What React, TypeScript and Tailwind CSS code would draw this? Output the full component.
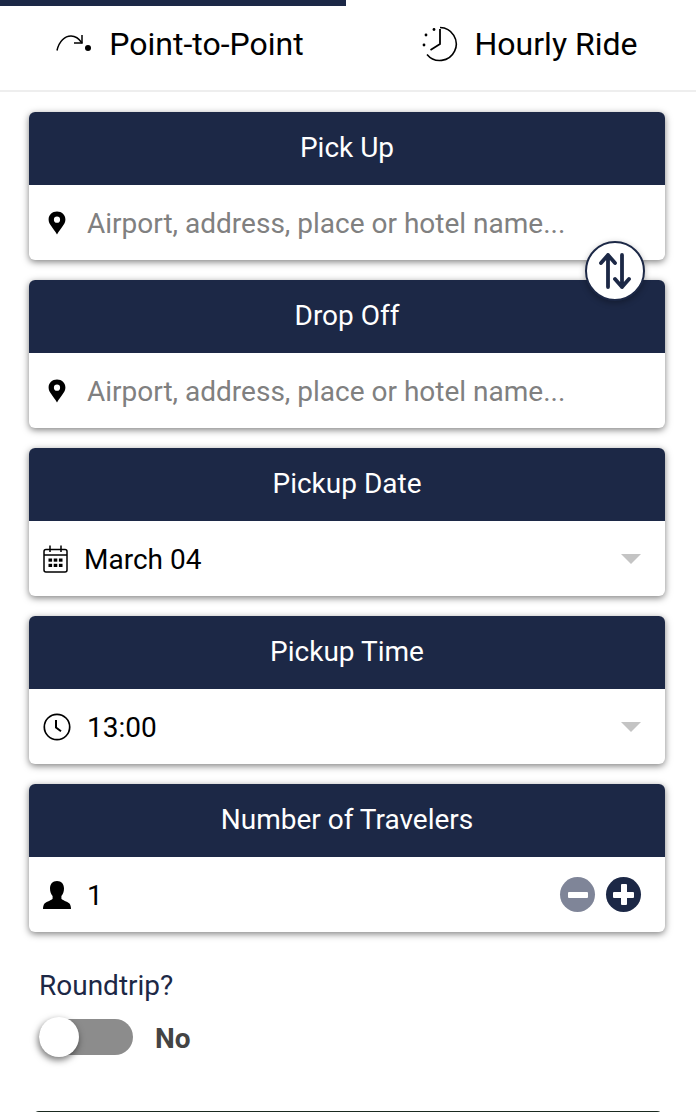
import { useState } from 'react';

const navy = 'bg-[#1c2846]';

function PinIcon() {
  return (
    <svg width="18" height="24" viewBox="0 0 18 24" className="text-black">
      <path
        fill="currentColor"
        fillRule="evenodd"
        d="M9 0.5C4.2 0.5 .6 4 .6 8.4c0 2.4 1 4.4 2.8 6.9 1.4 2 3.7 5 5.6 8.2 1.9-3.2 4.2-6.2 5.6-8.2 1.8-2.5 2.8-4.5 2.8-6.9C17.400 4 13.800 .5 9 .5zm0 5.100a3.100 3.100 0 1 1 0 6.200 3.100 3.100 0 0 1 0-6.200z"
      />
    </svg>
  );
}

function CalendarIcon() {
  return (
    <svg width="26" height="28" viewBox="0 0 26 28" fill="none" stroke="black" strokeWidth="1.5">
      <rect x="1" y="4.500" width="23" height="22.500" rx="2" />
      <path d="M1 10h23M7 .5v6.500M18 .5v6.500" />
      <g fill="black" stroke="none">
        <rect x="5.500" y="13.500" width="3.600" height="3.200" />
        <rect x="10.700" y="13.500" width="3.600" height="3.200" />
        <rect x="15.900" y="13.500" width="3.600" height="3.200" />
        <rect x="5.500" y="18.800" width="3.600" height="3.200" />
        <rect x="10.700" y="18.800" width="3.600" height="3.200" />
        <rect x="15.900" y="18.800" width="3.600" height="3.200" />
      </g>
    </svg>
  );
}

function ClockIcon() {
  return (
    <svg width="28" height="28" viewBox="0 0 28 28" fill="none" stroke="black">
      <circle cx="14" cy="14" r="12.700" strokeWidth="1.700" />
      <path d="M13 7v7.600l5 3.600" strokeWidth="2" />
    </svg>
  );
}

function PersonIcon() {
  return (
    <svg width="28" height="28" viewBox="0 0 28 28">
      <path
        fill="black"
        d="M14 0c-4.500 0-7 3-7 7.500 0 3 1 5.800 2.600 7.600v2.600c-.6 1.400-6 2.800-7.800 4.600C.6 23.500 0 25.800 0 28h28c0-2.200-.6-4.500-1.800-5.700-1.800-1.800-7.200-3.200-7.800-4.600v-2.600c1.600-1.800 2.600-4.600 2.600-7.600C21 3 18.500 0 14 0z"
      />
    </svg>
  );
}

function Card({ title, children }: { title: string; children: React.ReactNode }) {
  return (
    <div className="rounded-[6px] bg-white shadow-[0_2px_7px_rgba(0,0,0,0.5)]">
      <div className={`${navy} flex h-[73px] items-center justify-center rounded-t-[6px] pb-[2px] text-[28px] text-white`}>
        {title}
      </div>
      <div className="flex h-[75px] items-center">{children}</div>
    </div>
  );
}

function Caret() {
  return <div className="ml-auto mr-[24px] h-0 w-0 border-x-[10px] border-t-[10px] border-x-transparent border-t-[#c4c4c4]" />;
}

function PlaceInput() {
  return (
    <>
      <span className="ml-[19px] flex w-[18px] justify-center"><PinIcon /></span>
      <span className="ml-[21px] pt-[2px] text-[28px] text-[#808080]">Airport, address, place or hotel name...</span>
    </>
  );
}

export default function App() {
  const [roundtrip, setRoundtrip] = useState(false);
  const [travelers, setTravelers] = useState(1);

  return (
    <div className="h-[1112px] overflow-hidden bg-white font-['Roboto',sans-serif] text-black">
      <div className="h-[92px] border-b-2 border-[#eeeeee]">
        <div className={`${navy} h-[6px] w-[346px]`} />
        <div className="flex h-[84px]">
          <button className="flex w-[346px] items-center justify-center gap-[17px] pb-[8px] pl-[14px] text-[32px]">
            <svg width="36" height="20" viewBox="0 0 36 20" fill="none" stroke="black" strokeWidth="1.500">
              <path d="M1 16.500C3 7 9 2 15 2c4 0 8 2.500 11 7" />
              <path d="M26 1v8h-8" />
              <circle cx="32" cy="14" r="3" fill="black" stroke="none" />
            </svg>
            Point-to-Point
          </button>
          <button className="flex flex-1 items-center justify-center gap-[17px] pb-[8px] pl-[17px] text-[32px]">
            <svg width="36" height="36" viewBox="0 0 36 36" fill="none" stroke="black" strokeWidth="1.600">
              <path d="M18 1.500a16.500 16.500 0 1 1-13 27" />
              <path d="M18 3v15l-9.500 6" strokeWidth="1.800" />
              <g fill="black" stroke="none">
                <circle cx="12" cy="3.500" r="1.400" />
                <circle cx="4" cy="9" r="1.400" />
                <circle cx="2" cy="19" r="1.400" />
              </g>
            </svg>
            Hourly Ride
          </button>
        </div>
      </div>

      <div className="relative ml-[29px] mr-[31px] mt-[20px] flex flex-col gap-[20px]">
        <Card title="Pick Up"><PlaceInput /></Card>

        <button className="absolute left-[556px] top-[129px] flex h-[60px] w-[60px] items-center justify-center rounded-full border-2 border-[#1c2846] bg-white shadow-[0_2px_6px_rgba(0,0,0,0.3)]">
          <svg width="34" height="38" viewBox="0 0 34 38" fill="none" stroke="#1c2846" strokeWidth="3.800" strokeLinecap="round" strokeLinejoin="round">
            <path d="M10 35V3M3 11l7-8 7 8" />
            <path d="M24 3v32M17 27l7 8 7-8" />
          </svg>
        </button>

        <Card title="Drop Off"><PlaceInput /></Card>

        <Card title="Pickup Date">
          <span className="ml-[14px]"><CalendarIcon /></span>
          <span className="ml-[15px] pt-[3px] text-[28px]">March 04</span>
          <Caret />
        </Card>

        <Card title="Pickup Time">
          <span className="ml-[14px]"><ClockIcon /></span>
          <span className="ml-[16px] pt-[3px] text-[28px]">13:00</span>
          <Caret />
        </Card>

        <Card title="Number of Travelers">
          <span className="ml-[14px]"><PersonIcon /></span>
          <span className="ml-[16px] pt-[3px] text-[28px]">{travelers}</span>
          <div className="ml-auto mr-[24px] flex gap-[11px]">
            <button
              onClick={() => setTravelers(Math.max(1, travelers - 1))}
              className="flex h-[35px] w-[35px] items-center justify-center rounded-full bg-[#7f8598]"
            >
              <span className="h-[6px] w-[20px] rounded-[1px] bg-white" />
            </button>
            <button
              onClick={() => setTravelers(travelers + 1)}
              className={`${navy} relative flex h-[35px] w-[35px] items-center justify-center rounded-full`}
            >
              <span className="h-[6px] w-[21px] rounded-[1px] bg-white" />
              <span className="absolute left-[14.5px] top-[7px] h-[21px] w-[6px] rounded-[1px] bg-white" />
            </button>
          </div>
        </Card>
      </div>

      <div className="ml-[39px] mt-[38px] text-[28px] leading-[32px] text-[#1c2846]">Roundtrip?</div>
      <div className="ml-[39px] mt-[17px] flex h-[36px] items-center">
        <button onClick={() => setRoundtrip(!roundtrip)} className="relative h-[36px] w-[94px] rounded-full bg-[#8c8c8c]">
          <span
            className={`absolute top-[-2px] h-[40px] w-[40px] rounded-full bg-white shadow-[-1px_3px_7px_rgba(0,0,0,0.55)] ${roundtrip ? 'right-0' : 'left-0'}`}
          />
        </button>
        <span className="ml-[22px] pt-[4px] text-[28px] leading-[36px] font-bold text-[#444444]">{roundtrip ? 'Yes' : 'No'}</span>
      </div>

      <div className="mx-[33px] mt-[56px] h-[20px] rounded-t-[6px] bg-[#1a2a20]" />
    </div>
  );
}
